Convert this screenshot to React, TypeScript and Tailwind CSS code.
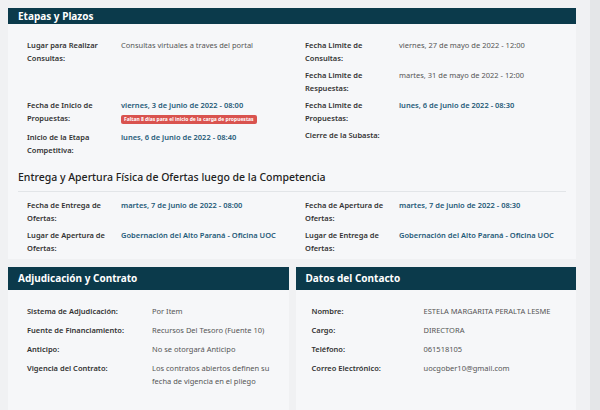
const font = { fontFamily: '"Noto Sans", "Open Sans", sans-serif' };

const Row = ({ label, value, cls = 'text-[#555]', h = 'h-[30px]', lw = 'w-[94px]' }: any) => (
  <div className={`flex ${h}`}>
    <div className={`${lw} shrink-0 font-semibold text-[#333] leading-[13px]`}>{label}</div>
    <div className={`${cls} leading-[13px]`}>{value}</div>
  </div>
);

const Header = ({ title }: { title: string }) => (
  <div className="h-[23px] bg-[#0b3a4b] text-white font-bold text-[10px] flex items-center px-[10px]">{title}</div>
);

const blue = 'text-[#1f5a78] font-semibold';

export default function App() {
  return (
    <div className="w-[600px] h-[410px] bg-[#f0f1f3] flex overflow-hidden text-[7.5px]" style={font}>
      <div className="w-[590px] pl-[8px] pr-[14px] pt-[8px] flex flex-col">
        <Header title="Etapas y Plazos" />
        <div className="bg-[#f6f7f9] h-[244px] px-[10px] pt-[15px]">
          <div className="flex">
            <div className="w-[278px] pl-[9px]">
              <Row label={<>Lugar para Realizar<br />Consultas:</>} value="Consultas virtuales a traves del portal" h="h-[60px]" />
              <Row label={<>Fecha de Inicio de<br />Propuestas:</>} h="h-[32px]" value={<div><div className={blue}>viernes, 3 de junio de 2022 - 08:00</div><div className="mt-[1px] inline-block bg-[#d9534f] text-white text-[5px] font-bold px-[3px] py-[1px] rounded-[2px] leading-[7px]">Faltan 8 días para el inicio de la carga de propuestas</div></div>} />
              <Row label={<>Inicio de la Etapa<br />Competitiva:</>} value="lunes, 6 de junio de 2022 - 08:40" cls={blue} />
            </div>
            <div className="pl-[9px]">
              <Row label={<>Fecha Limite de<br />Consultas:</>} value="viernes, 27 de mayo de 2022 - 12:00" />
              <Row label={<>Fecha Limite de<br />Respuestas:</>} value="martes, 31 de mayo de 2022 - 12:00" />
              <Row label={<>Fecha Limite de<br />Propuestas:</>} value="lunes, 6 de junio de 2022 - 08:30" cls={blue} />
              <Row label="Cierre de la Subasta:" value="" />
            </div>
          </div>
          <div className="mt-[9px] text-[10.5px] text-[#222] font-medium pb-[5px] border-b border-[#e2e5e8]">Entrega y Apertura Física de Ofertas luego de la Competencia</div>
          <div className="flex pt-[7px]">
            <div className="w-[278px] pl-[9px]">
              <Row label={<>Fecha de Entrega de<br />Ofertas:</>} value="martes, 7 de junio de 2022 - 08:00" cls={blue} />
              <Row label={<>Lugar de Apertura de<br />Ofertas:</>} value="Gobernación del Alto Paraná - Oficina UOC" cls={blue} />
            </div>
            <div className="pl-[9px]">
              <Row label={<>Fecha de Apertura de<br />Ofertas:</>} value="martes, 7 de junio de 2022 - 08:30" cls={blue} />
              <Row label={<>Lugar de Entrega de<br />Ofertas:</>} value="Gobernación del Alto Paraná - Oficina UOC" cls={blue} />
            </div>
          </div>
        </div>
        <div className="flex gap-[7px] mt-[8px]">
          <div className="flex-1">
            <Header title="Adjudicación y Contrato" />
            <div className="bg-[#f6f7f9] h-[120px] pl-[19px] pt-[15px]">
              <Row label="Sistema de Adjudicación:" value="Por Item" h="h-[19px]" lw="w-[125px]" />
              <Row label="Fuente de Financiamiento:" value="Recursos Del Tesoro (Fuente 10)" h="h-[19px]" lw="w-[125px]" />
              <Row label="Anticipo:" value="No se otorgará Anticipo" h="h-[19px]" lw="w-[125px]" />
              <Row label="Vigencia del Contrato:" value={<>Los contratos abiertos definen su<br />fecha de vigencia en el pliego</>} h="h-[30px]" lw="w-[125px]" />
            </div>
          </div>
          <div className="flex-1">
            <Header title="Datos del Contacto" />
            <div className="bg-[#f6f7f9] h-[120px] pl-[16px] pt-[15px]">
              <Row label="Nombre:" value="ESTELA MARGARITA PERALTA LESME" h="h-[19px]" lw="w-[112px]" />
              <Row label="Cargo:" value="DIRECTORA" h="h-[19px]" lw="w-[112px]" />
              <Row label="Teléfono:" value="061518105" h="h-[19px]" lw="w-[112px]" />
              <Row label="Correo Electrónico:" value="uocgober10@gmail.com" h="h-[19px]" lw="w-[112px]" />
            </div>
          </div>
        </div>
      </div>
      <div className="flex-1 bg-[#e4e6e8]" />
    </div>
  );
}
